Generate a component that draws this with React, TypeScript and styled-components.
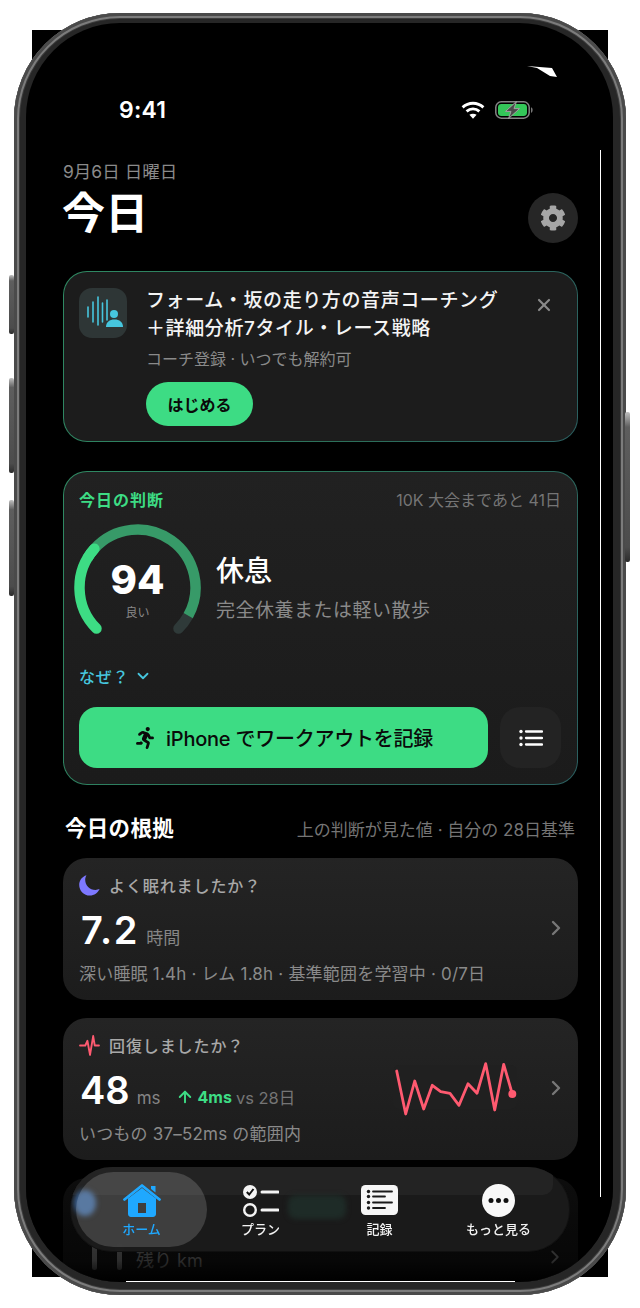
import styled, { createGlobalStyle } from "styled-components";
import { ArrowUp, ChevronDown, ChevronRight, X } from "lucide-react";
import { FaCog, FaRunning } from "react-icons/fa";

const GlobalStyle = createGlobalStyle`
  html, body {
    margin: 0;
    background: #fff;
  }
  * {
    box-sizing: border-box;
  }
  body {
    font-family: Inter, "Noto Sans CJK JP", sans-serif;
  }
`;

const Page = styled.div`
  position: relative;
  width: 640px;
  height: 1308px;
  padding: 13px 0 0 14px;
  overflow: hidden;
  background: #fff;

  /* the square screenshot that pokes out behind the rounded bezel */
  &::before {
    content: "";
    position: absolute;
    left: 32px;
    top: 30px;
    width: 576px;
    height: 1247px;
    background: #000;
  }
`;

const Phone = styled.div`
  position: relative;
  width: 612px;
  height: 1282px;
  padding: 10px 13px 13px 12px;
  border-radius: 106px;
  background: #262626;
  box-shadow:
    inset 0 0 0 3px #4a4a4a,
    inset 0 0 0 5px #7c7c7c,
    inset 0 0 0 6px #3c3c3c;
`;

const SideKey = styled.div<{ $side: "left" | "right"; $top: number; $h: number }>`
  position: absolute;
  ${(p) => (p.$side === "left" ? "left: -5px;" : "right: -4px;")}
  top: ${(p) => p.$top}px;
  width: 5px;
  height: ${(p) => p.$h}px;
  border-radius: 2px;
  background: linear-gradient(#c0c0c0 0, #5e5e5e 10%, #4c4c4c 90%, #2c2c2c 100%);
`;

const Screen = styled.div`
  position: relative;
  width: 100%;
  height: 100%;
  padding: 73px 35px 0 37px;
  border-radius: 94px;
  overflow: hidden;
  background: #000;
  color: #fff;
`;

const Glitch = styled.div<{ $v?: boolean }>`
  position: absolute;
  background: #fff;
  ${(p) =>
    p.$v
      ? "left: 574px; top: 127px; width: 1px; height: 1047px;"
      : "left: 100px; bottom: 0; width: 389px; height: 1px;"}
  z-index: 6;
`;

const Glint = styled.svg`
  position: absolute;
  left: 501px;
  top: 43px;
`;

const StatusBar = styled.div`
  display: flex;
  align-items: center;
  justify-content: space-between;
  height: 28px;
  padding: 0 45px 0 56px;
`;

const Time = styled.span`
  font-size: 23px;
  font-weight: 600;
  letter-spacing: 0.2px;
`;

const StatusIcons = styled.div`
  display: flex;
  align-items: center;
  gap: 10px;
`;

const DateText = styled.div`
  margin-top: 36px;
  font-size: 17.5px;
  line-height: 24px;
  color: #8a8a8a;
`;

const TitleRow = styled.div`
  display: flex;
  align-items: center;
  justify-content: space-between;
  height: 50px;
  margin-top: 9px;
`;

const Title = styled.h1`
  align-self: flex-start;
  margin: 0 0 0 -1px;
  font-size: 43px;
  font-weight: 600;
  letter-spacing: 0.3px;
  line-height: 40px;
`;

const GearButton = styled.div`
  display: flex;
  align-items: center;
  justify-content: center;
  width: 50px;
  height: 50px;
  border-radius: 50%;
  background: #262626;
  color: #a6a6a6;
`;

const GlowCard = styled.section`
  border: 1px solid transparent;
  background:
    linear-gradient(#212121, #1b1b1b) padding-box,
    linear-gradient(110deg, #2f8a63, #2c6f5a 60%, #2b5f60) border-box;
`;

const Promo = styled(GlowCard)`
  display: flex;
  gap: 19px;
  height: 171px;
  margin-top: 28px;
  padding: 16px 15px 0;
  border-radius: 24px;
  background:
    linear-gradient(#1c1c1c, #1c1c1c) padding-box,
    linear-gradient(110deg, #2f8a63, #2c6f5a 60%, #2b5f60) border-box;
`;

const PromoIcon = styled.div`
  flex: none;
  width: 48px;
  height: 50px;
  border-radius: 13px;
  background: #2e3636;
`;

const PromoBody = styled.div`
  flex: 1;
  margin-top: -1px;
`;

const PromoTitle = styled.div`
  font-size: 19px;
  font-weight: 500;
  line-height: 28px;
  letter-spacing: 0.6px;
  color: #f4f4f4;
`;

const PromoSub = styled.div`
  margin-top: 4px;
  font-size: 16px;
  line-height: 24px;
  color: #8a8a8a;
`;

const PillButton = styled.div`
  display: flex;
  align-items: center;
  justify-content: center;
  width: 107px;
  height: 44px;
  margin-top: 11px;
  border-radius: 22px;
  background: #3ddc84;
  color: #0a0a0a;
  font-size: 16px;
  font-weight: 700;
`;

const CloseButton = styled.div`
  flex: none;
  margin: 7px 8px 0 0;
  height: 20px;
  color: #8a8a8a;
`;

const Decision = styled(GlowCard)`
  height: 314px;
  margin-top: 29px;
  padding: 13px 16px 0 15px;
  border-radius: 24px;
`;

const DecisionHead = styled.div`
  display: flex;
  justify-content: space-between;
  align-items: center;
  height: 27px;
`;

const DecisionLabel = styled.span`
  font-size: 16px;
  font-weight: 600;
  letter-spacing: 1px;
  color: #3ddc84;
`;

const Countdown = styled.span`
  font-size: 16px;
  color: #757575;
`;

const ScoreRow = styled.div`
  display: flex;
  align-items: center;
  gap: 15px;
  height: 116px;
  margin: 12px 0 0 -5px;
`;

const Gauge = styled.div`
  position: relative;
  flex: none;
  width: 127px;
  height: 116px;
`;

const GaugeText = styled.div`
  position: absolute;
  inset: 0;
  display: flex;
  flex-direction: column;
  align-items: center;
  padding-top: 35px;
`;

const Score = styled.span`
  font-size: 40px;
  font-weight: 800;
  line-height: 42px;
`;

const ScoreCaption = styled.span`
  margin-top: 4px;
  font-size: 12px;
  line-height: 16px;
  color: #888;
`;

const Verdict = styled.div`
  padding-top: 12px;
`;

const VerdictTitle = styled.div`
  font-size: 28px;
  font-weight: 500;
  line-height: 40px;
`;

const VerdictSub = styled.div`
  margin-top: 6px;
  font-size: 19px;
  line-height: 28px;
  letter-spacing: 0.5px;
  color: #8a8a8a;
`;

const WhyRow = styled.div`
  display: flex;
  align-items: center;
  gap: 5px;
  height: 24px;
  margin-top: 24px;
  font-size: 16px;
  font-weight: 500;
  letter-spacing: 0.8px;
  color: #46c6de;
`;

const ActionRow = styled.div`
  display: flex;
  gap: 12px;
  margin-top: 19px;
`;

const PrimaryButton = styled.div`
  display: flex;
  align-items: center;
  justify-content: center;
  gap: 10px;
  width: 409px;
  height: 61px;
  border-radius: 18px;
  background: #3ddc84;
  color: #0a0a0a;
  font-size: 20px;
  font-weight: 500;
  letter-spacing: -0.25px;
`;

const SquareButton = styled.div`
  display: flex;
  align-items: center;
  justify-content: center;
  width: 61px;
  height: 61px;
  border-radius: 20px;
  background: #232323;
`;

const SectionHead = styled.div`
  display: flex;
  justify-content: space-between;
  align-items: center;
  height: 28px;
  margin-top: 29px;
  padding: 0 3px;
`;

const SectionTitle = styled.h2`
  margin: 0 0 4px -1px;
  font-size: 21.5px;
  font-weight: 600;
  letter-spacing: 0.3px;
`;

const SectionNote = styled.span`
  font-size: 17px;
  color: #757575;
`;

const MetricCard = styled.section`
  display: flex;
  align-items: center;
  height: 142px;
  margin-top: 18px;
  padding: 0 10px 0 16px;
  border-radius: 24px;
  background: linear-gradient(#242424, #1c1c1c);

  ${SectionHead} + & {
    margin-top: 16px;
  }
`;

const MetricMain = styled.div`
  flex: 1;
  min-width: 0;
  align-self: flex-start;
  padding-top: 15px;
`;

const MetricHead = styled.div`
  display: flex;
  align-items: center;
  gap: 9px;
  height: 24px;
  font-size: 16px;
  font-weight: 500;
  letter-spacing: 0.9px;
  color: #a8a8a8;
`;

const ValueRow = styled.div`
  display: flex;
  align-items: baseline;
  height: 46px;
  margin-top: 10px;
`;

const Value = styled.span<{ $wide?: boolean }>`
  margin-left: ${(p) => (p.$wide ? "2px" : "1px")};
  font-size: 38px;
  font-weight: 600;
  line-height: 46px;
  letter-spacing: ${(p) => (p.$wide ? "1.8px" : "0")};
`;

const Unit = styled.span`
  margin-left: 7px;
  font-size: 17px;
  color: #858585;
`;

const Delta = styled.span`
  display: inline-flex;
  align-items: center;
  gap: 4px;
  margin-left: 15px;
  align-self: flex-end;
  height: 32px;
  font-size: 16px;
  font-weight: 700;
  color: #3ddc84;
`;

const DeltaNote = styled.span`
  font-size: 16.5px;
  font-weight: 400;
  color: #757575;
`;

const MetricNote = styled.div`
  margin-top: 9px;
  font-size: 17px;
  line-height: 24px;
  letter-spacing: 0.2px;
  color: #8a8a8a;
`;

const SparkBox = styled.div`
  flex: none;
  width: 124px;
  height: 44px;
  margin: -4px 27px 0 0;
  border-radius: 6px;
  background: #202020;
`;

const Chevron = styled.div`
  flex: none;
  margin-top: -2px;
  height: 24px;
  color: #777;
`;

const HiddenCard = styled(MetricCard)`
  position: relative;
  align-items: flex-start;
  height: 160px;
  padding-top: 12px;
`;

const HiddenRemain = styled.div`
  position: absolute;
  left: 73px;
  top: 68px;
  font-size: 18px;
  color: #ccc;
`;

const HiddenBar = styled.div<{ $x: number }>`
  position: absolute;
  left: ${(p) => p.$x}px;
  top: 64px;
  width: 5px;
  height: 28px;
  border-radius: 3px;
  background: #ccc;
`;

const HiddenChevron = styled.div`
  position: absolute;
  right: 12px;
  top: 68px;
  color: #ccc;
`;

const BottomFade = styled.div`
  position: absolute;
  left: 0;
  right: 0;
  bottom: 0;
  height: 120px;
  background: linear-gradient(rgba(0, 0, 0, 0.6), rgba(0, 0, 0, 0.78) 82%, #000);
  z-index: 4;
`;

const TabBar = styled.nav`
  position: absolute;
  left: 44px;
  top: 1144px;
  display: flex;
  width: 500px;
  height: 85px;
  padding: 0 12px;
  border-radius: 42px;
  background: rgba(28, 28, 28, 0.94);
  backdrop-filter: blur(5px);
  box-shadow: inset 0 0 0 1px rgba(0, 0, 0, 0.35);
  overflow: hidden;
  z-index: 5;
`;

/* what shows through the glass: the card edge, an icon and a chip under the bar */
const GlassBand = styled.div`
  position: absolute;
  left: 0;
  right: 17px;
  top: 0;
  height: 28px;
  border-radius: 0 0 10px 0;
  background: #232323;
`;

const GlassBlob = styled.div<{ $green?: boolean }>`
  position: absolute;
  left: ${(p) => (p.$green ? "218px" : "4px")};
  top: ${(p) => (p.$green ? "28px" : "23px")};
  width: ${(p) => (p.$green ? "58px" : "22px")};
  height: ${(p) => (p.$green ? "24px" : "26px")};
  border-radius: ${(p) => (p.$green ? "8px" : "50%")};
  background: ${(p) => (p.$green ? "#1e2b27" : "#3a6090")};
  filter: blur(2.5px);
`;

const TabItem = styled.div<{ $active?: boolean }>`
  position: relative;
  display: flex;
  flex-direction: column;
  align-items: center;
  justify-content: flex-end;
  width: 119px;
  height: 71px;
  font-size: 13px;
  font-weight: 500;
  color: ${(p) => (p.$active ? "#1fa8ff" : "#f2f2f2")};

  ${(p) =>
    p.$active &&
    `&::before {
      content: "";
      position: absolute;
      left: -6px;
      right: -6px;
      top: 5px;
      height: 75px;
      border-radius: 38px;
      background: rgba(255, 255, 255, 0.16);
    }`}
`;

const TabIcon = styled.div`
  position: relative;
  display: flex;
  align-items: center;
  justify-content: center;
  height: 34px;
`;

const TabLabel = styled.span`
  position: relative;
  margin-top: 3px;
  line-height: 18px;
`;

const polar = (a: number, r = 58) => {
  const t = ((a - 90) * Math.PI) / 180;
  return [63.5 + r * Math.cos(t), 63.5 + r * Math.sin(t)];
};

const arc = (from: number, to: number) => {
  const [x1, y1] = polar(from);
  const [x2, y2] = polar(to);
  const large = to - from > 180 ? 1 : 0;
  return `M${x1} ${y1}A58 58 0 ${large} 1 ${x2} ${y2}`;
};

const spark = [
  [396.7, 1071],
  [405.7, 1114],
  [414.7, 1081],
  [423.7, 1109],
  [432.3, 1085.3],
  [440.7, 1091.7],
  [450, 1093.3],
  [459, 1105.3],
  [468, 1083.7],
  [477, 1093.3],
  [485.7, 1063.7],
  [494.7, 1110],
  [503.7, 1064.3],
  [512.3, 1094],
];

function Wifi() {
  return (
    <svg width="24" height="18" viewBox="0 0 24 18" fill="none" stroke="#fff" strokeWidth="2.9">
      <path d="M1.6 6.4C7.6 .9 16.4 .9 22.4 6.4" />
      <path d="M5.6 10.4C9.4 7 14.6 7 18.4 10.4" />
      <path d="M12 17.8L8.4 13.8C10.5 12.3 13.5 12.3 15.6 13.8Z" fill="#fff" stroke="none" />
    </svg>
  );
}

function Battery() {
  return (
    <svg width="38" height="18" viewBox="0 0 38 18">
      <rect x=".8" y=".8" width="33.4" height="16.4" rx="5.5" fill="none" stroke="#858585" strokeWidth="1.5" />
      <rect x="3" y="3" width="29" height="12" rx="3.4" fill="#34c759" />
      <path d="M36 6.2c1.2.4 1.6 1.4 1.6 2.8s-.4 2.4-1.6 2.8z" fill="#777" />
      <path d="M21.5 .4L10.5 10.4H16L13.500 17.6L24.500 7.600H19Z" fill="#4a4a4a" stroke="#a0a0a0" strokeWidth="1" />
    </svg>
  );
}

function VoiceIcon() {
  return (
    <svg width="48" height="50" viewBox="0 0 48 50" fill="none" stroke="#46c6de" strokeLinecap="round">
      <path d="M9 19V29M14 14V34M19 9V37M23.500 15V34M28 12V32" strokeWidth="1.600" />
      <circle cx="35" cy="26" r="4" fill="#46c6de" stroke="none" />
      <path d="M27 39c0-5 3.500-7.500 8.500-7.500s8.500 2.500 8.500 7.500z" fill="#46c6de" stroke="none" />
    </svg>
  );
}

function ScoreGauge() {
  return (
    <Gauge>
      <svg width="127" height="116" viewBox="0 0 127 116" fill="none" strokeWidth="10.500">
        <path d={arc(119, 135)} stroke="#2f3a39" strokeLinecap="round" />
        <path d={arc(-48, 119)} stroke="#379a68" />
        <path d={arc(-135, -48)} stroke="#3ddc84" strokeLinecap="round" />
        <path d={arc(-60, -48)} stroke="#3ddc84" />
      </svg>
      <GaugeText>
        <Score>94</Score>
        <ScoreCaption>良い</ScoreCaption>
      </GaugeText>
    </Gauge>
  );
}

function ListIcon() {
  return (
    <svg width="24" height="18" viewBox="0 0 24 18" fill="#fff" stroke="#fff">
      <circle cx="2" cy="2.500" r="1.700" stroke="none" />
      <circle cx="2" cy="9" r="1.700" stroke="none" />
      <circle cx="2" cy="15.500" r="1.700" stroke="none" />
      <path d="M7 2.500H23M7 9H23M7 15.500H23" strokeWidth="2.300" strokeLinecap="round" />
    </svg>
  );
}

function Moon() {
  return (
    <svg width="21" height="21" viewBox="0 0 21 21">
      <path d="M7.5 .3C3.200 1.500 .2 5.400 .2 10c0 5.800 4.700 10.600 10.600 10.600 4.400 0 8.200-2.700 9.800-6.500-1.300.5-2.700.8-4.100.8C10.600 14.900 6.200 10.500 6.200 4.700c0-1.500.5-3.100 1.300-4.400z" fill="#7d78ff" />
    </svg>
  );
}

function Pulse() {
  return (
    <svg width="21" height="21" viewBox="0 0 20 20" fill="none" stroke="#ff5a70" strokeWidth="1.800" strokeLinejoin="round" strokeLinecap="round">
      <path d="M1 10H6L8 5.500L10.500 19L13.500 1L15 10H19" />
    </svg>
  );
}

function Spark() {
  const x0 = 393;
  const y0 = 1065;
  const pts = spark.map(([x, y]) => `${x - x0},${y - y0}`).join(" ");
  const [lx, ly] = spark[spark.length - 1];
  return (
    <svg width="124" height="44" viewBox="0 0 124 44" overflow="visible" fill="none">
      <polyline points={pts} stroke="#ff5a70" strokeWidth="2.800" strokeLinejoin="round" strokeLinecap="round" />
      <circle cx={lx - x0} cy={ly - y0} r="4" fill="#ff5a70" />
    </svg>
  );
}

function HomeIcon() {
  return (
    <svg width="38" height="34" viewBox="0 0 38 34">
      <path d="M28 3H32.500V9.500L28 6Z" fill="#1fa8ff" />
      <path fillRule="evenodd" d="M19 5L33 15.500V31c0 1.600-1.300 3-3 3H8c-1.700 0-3-1.400-3-3V15.500ZM15 20V30H23V20Z" fill="#1fa8ff" />
      <path d="M1.500 16.500L19 2.500L36.500 16.500" fill="none" stroke="#1fa8ff" strokeWidth="2.800" strokeLinecap="round" strokeLinejoin="round" />
    </svg>
  );
}

function PlanIcon() {
  return (
    <svg width="36" height="34" viewBox="0 0 36 34">
      <circle cx="7" cy="9" r="7" fill="#f4f4f4" />
      <path d="M3.800 9L6.200 11.500L10.500 6" fill="none" stroke="#111" strokeWidth="2" />
      <circle cx="7" cy="27" r="5.800" fill="none" stroke="#f4f4f4" strokeWidth="2.400" />
      <path d="M19 9H35M19 27H35" stroke="#f4f4f4" strokeWidth="3" strokeLinecap="round" />
    </svg>
  );
}

function LogIcon() {
  return (
    <svg width="37" height="30" viewBox="0 0 37 30">
      <rect width="37" height="30" rx="4.500" fill="#f6f6f6" />
      <g fill="#1a1a1a">
        <circle cx="7.500" cy="6.500" r="1.700" />
        <circle cx="7.500" cy="11.500" r="1.700" />
        <circle cx="7.500" cy="17.500" r="1.700" />
        <circle cx="7.500" cy="23" r="1.700" />
      </g>
      <path d="M12 6.500H31M12 11.500H24M12 17.500H31M12 23H24" stroke="#1a1a1a" strokeWidth="1.800" strokeLinecap="round" />
    </svg>
  );
}

function MoreIcon() {
  return (
    <svg width="33" height="33" viewBox="0 0 33 33">
      <circle cx="16.500" cy="16.500" r="16.500" fill="#f8f8f8" />
      <circle cx="9" cy="16.500" r="2.500" fill="#111" />
      <circle cx="16.500" cy="16.500" r="2.500" fill="#111" />
      <circle cx="24" cy="16.500" r="2.500" fill="#111" />
    </svg>
  );
}

export default function App() {
  return (
    <>
      <GlobalStyle />
      <Page>
        <Phone>
          <SideKey $side="left" $top={262} $h={59} />
          <SideKey $side="left" $top={365} $h={95} />
          <SideKey $side="left" $top={487} $h={96} />
          <SideKey $side="right" $top={399} $h={150} />
          <Screen>
            <Glint width="30" height="11" viewBox="0 0 30 11">
              <path d="M0 0L25 2L30 11L23 10L10 2Z" fill="#fff" />
            </Glint>
            <StatusBar>
              <Time>9:41</Time>
              <StatusIcons>
                <Wifi />
                <Battery />
              </StatusIcons>
            </StatusBar>

            <DateText>9月6日 日曜日</DateText>
            <TitleRow>
              <Title>今日</Title>
              <GearButton>
                <FaCog size={26} />
              </GearButton>
            </TitleRow>

            <Promo>
              <PromoIcon>
                <VoiceIcon />
              </PromoIcon>
              <PromoBody>
                <PromoTitle>
                  フォーム・坂の走り方の音声コーチング
                  <br />＋詳細分析7タイル・レース戦略
                </PromoTitle>
                <PromoSub>コーチ登録 · いつでも解約可</PromoSub>
                <PillButton>はじめる</PillButton>
              </PromoBody>
              <CloseButton>
                <X size={20} strokeWidth={2.6} />
              </CloseButton>
            </Promo>

            <Decision>
              <DecisionHead>
                <DecisionLabel>今日の判断</DecisionLabel>
                <Countdown>10K 大会まであと 41日</Countdown>
              </DecisionHead>
              <ScoreRow>
                <ScoreGauge />
                <Verdict>
                  <VerdictTitle>休息</VerdictTitle>
                  <VerdictSub>完全休養または軽い散歩</VerdictSub>
                </Verdict>
              </ScoreRow>
              <WhyRow>
                なぜ？
                <ChevronDown size={18} strokeWidth={2.4} />
              </WhyRow>
              <ActionRow>
                <PrimaryButton>
                  <FaRunning size={22} />
                  iPhone でワークアウトを記録
                </PrimaryButton>
                <SquareButton>
                  <ListIcon />
                </SquareButton>
              </ActionRow>
            </Decision>

            <SectionHead>
              <SectionTitle>今日の根拠</SectionTitle>
              <SectionNote>上の判断が見た値 · 自分の 28日基準</SectionNote>
            </SectionHead>

            <MetricCard>
              <MetricMain>
                <MetricHead>
                  <Moon />
                  よく眠れましたか？
                </MetricHead>
                <ValueRow>
                  <Value $wide>7.2</Value>
                  <Unit>時間</Unit>
                </ValueRow>
                <MetricNote>深い睡眠 1.4h · レム 1.8h · 基準範囲を学習中 · 0/7日</MetricNote>
              </MetricMain>
              <Chevron>
                <ChevronRight size={24} strokeWidth={2.4} />
              </Chevron>
            </MetricCard>

            <MetricCard>
              <MetricMain>
                <MetricHead>
                  <Pulse />
                  回復しましたか？
                </MetricHead>
                <ValueRow>
                  <Value>48</Value>
                  <Unit>ms</Unit>
                  <Delta>
                    <ArrowUp size={18} strokeWidth={2.6} />
                    4ms
                    <DeltaNote>vs 28日</DeltaNote>
                  </Delta>
                </ValueRow>
                <MetricNote>いつもの 37–52ms の範囲内</MetricNote>
              </MetricMain>
              <SparkBox>
                <Spark />
              </SparkBox>
              <Chevron>
                <ChevronRight size={24} strokeWidth={2.4} />
              </Chevron>
            </MetricCard>

            <HiddenCard>
              <HiddenBar $x={29} />
              <HiddenBar $x={54} />
              <HiddenRemain>残り km</HiddenRemain>
              <HiddenChevron>
                <ChevronRight size={22} />
              </HiddenChevron>
            </HiddenCard>

            <BottomFade />
            <TabBar>
              <GlassBand />
              <GlassBlob />
              <GlassBlob $green />
              <TabItem $active>
                <TabIcon>
                  <HomeIcon />
                </TabIcon>
                <TabLabel>ホーム</TabLabel>
              </TabItem>
              <TabItem>
                <TabIcon>
                  <PlanIcon />
                </TabIcon>
                <TabLabel>プラン</TabLabel>
              </TabItem>
              <TabItem>
                <TabIcon>
                  <LogIcon />
                </TabIcon>
                <TabLabel>記録</TabLabel>
              </TabItem>
              <TabItem>
                <TabIcon>
                  <MoreIcon />
                </TabIcon>
                <TabLabel>もっと見る</TabLabel>
              </TabItem>
            </TabBar>
            <Glitch $v />
            <Glitch />
          </Screen>
        </Phone>
      </Page>
    </>
  );
}
